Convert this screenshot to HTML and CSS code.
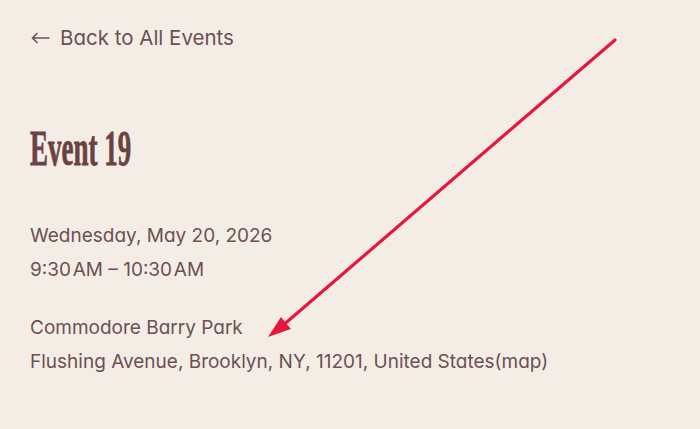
FILE: index.html
```html
<!DOCTYPE html>
<html lang="en">
<head>
    <meta charset="UTF-8" />
    <meta name="viewport" content="width=device-width, initial-scale=1" />
    <title>Event 19</title>
    <link rel="stylesheet" href="styles.css">
</head>
<body>

<div class="event-page">
    <a class="back-link" href="#">
        <svg class="back-arrow" width="19" height="12" viewBox="0 0 19 12">
            <path d="M18.5 6H1.5M6.5 1L1.5 6L6.5 11" fill="none" stroke="currentColor" stroke-width="1.6" />
        </svg>
        Back to All Events
    </a>

    <h1 class="event-title"><span>Event 19</span></h1>

    <div class="event-meta">
        <p>Wednesday, May 20, 2026</p>
        <p>9:30&#8202;AM &ndash; 10:30&#8202;AM</p>
    </div>

    <div class="event-meta">
        <p>Commodore Barry Park</p>
        <p>Flushing Avenue, Brooklyn, NY, 11201, United States<a href="#">(map)</a></p>
    </div>
</div>

<!-- Annotation arrow -->
<svg class="annotation" width="700" height="429" viewBox="0 0 700 429">
    <line x1="615" y1="40" x2="281" y2="327" stroke="#e8163f" stroke-width="3.2" stroke-linecap="round" />
    <polygon points="268,337 281,317 291,329" fill="#e8163f" />
</svg>

</body>
</html>
```

FILE: styles.css
```css
* { box-sizing: border-box; margin: 0; padding: 0; }
body {
    font-family: "Inter", "Liberation Sans", sans-serif;
    font-feature-settings: "cv11";
    background-color: #f4ede6;
    color: #6d5052;
    width: 700px;
    height: 429px;
    overflow: hidden;
    position: relative;
}
.event-page {
    padding: 24px 30px;
}
.back-link {
    display: flex;
    align-items: center;
    gap: 10px;
    font-size: 20.5px;
    line-height: 28px;
    color: #6d5052;
    text-decoration: none;
}
.back-arrow { margin-left: 1px; }
.event-title {
    margin-top: 68px;
    font-family: "Liberation Serif", serif;
    font-weight: bold;
    font-size: 50px;
    line-height: 56px;
    color: #6b4244;
    white-space: nowrap;
    -webkit-text-stroke: 0.8px #6b4244;
}
/* no condensed serif installed, so squeeze the heading */
.event-title span {
    display: inline-block;
    transform: scaleX(0.54);
    transform-origin: left center;
}
.event-meta {
    margin-top: 43px;
    font-size: 19px;
    line-height: 34px;
}
.event-meta + .event-meta { margin-top: 24px; }
.event-meta a {
    color: inherit;
    text-decoration: none;
}
/* arrow sits on top of the page */
.annotation {
    position: absolute;
    top: 0;
    left: 0;
    pointer-events: none;
}
```
